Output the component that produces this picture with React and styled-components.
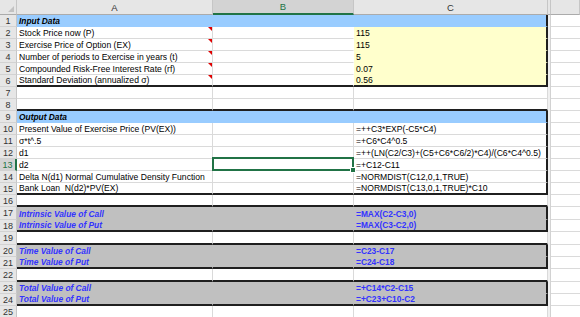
import React from "react";
import styled, { createGlobalStyle } from "styled-components";

const LINE = "#dadada";
const DARK = "#1f1f1f";
const GREEN = "#217346";
const BLUE_FILL = "#99ccff";
const YELLOW = "#ffffcc";
const GRAY = "#c0c0c0";

const rows = [
  { n: 1, a: "Input Data", title: true, fill: BLUE_FILL, box: true },
  { n: 2, a: "Stock Price now (P)", c: "115", note: true, cFill: YELLOW, box: true },
  { n: 3, a: "Exercise Price of Option (EX)", c: "115", note: true, cFill: YELLOW, box: true },
  { n: 4, a: "Number of periods to Exercise in years (t)", c: "5", note: true, cFill: YELLOW, box: true },
  { n: 5, a: "Compounded Risk-Free Interest Rate (rf)", c: "0.07", note: true, cFill: YELLOW, box: true },
  { n: 6, a: "Standard Deviation (annualized σ)", c: "0.56", note: true, cFill: YELLOW, box: true, edge: true },
  { n: 7 },
  { n: 8, edge: true },
  { n: 9, a: "Output Data", title: true, fill: BLUE_FILL, box: true },
  { n: 10, a: "Present Value of Exercise Price (PV(EX))", c: "=++C3*EXP(-C5*C4)", box: true },
  { n: 11, a: "σ*t^.5", c: "=+C6*C4^0.5", box: true },
  { n: 12, a: "d1", c: "=++(LN(C2/C3)+(C5+C6*C6/2)*C4)/(C6*C4^0.5)", box: true },
  { n: 13, a: "d2", c: "=+C12-C11", box: true, selected: true },
  { n: 14, a: "Delta N(d1) Normal Cumulative Density Function", c: "=NORMDIST(C12,0,1,TRUE)", box: true },
  { n: 15, a: "Bank Loan  N(d2)*PV(EX)", c: "=NORMDIST(C13,0,1,TRUE)*C10", box: true, edge: true },
  { n: 16, edge: true },
  { n: 17, h: 13, a: "Intrinsic Value of Call", c: "=MAX(C2-C3,0)", fill: GRAY, result: true, box: true },
  { n: 18, a: "Intrinsic Value of Put", c: "=MAX(C3-C2,0)", fill: GRAY, result: true, box: true, edge: true },
  { n: 19, h: 13, edge: true },
  { n: 20, a: "Time Value of Call", c: "=C23-C17", fill: GRAY, result: true, box: true },
  { n: 21, a: "Time Value of Put", c: "=C24-C18", fill: GRAY, result: true, box: true, edge: true },
  { n: 22, h: 13, edge: true },
  { n: 23, a: "Total Value of Call", c: "=+C14*C2-C15", fill: GRAY, result: true, box: true },
  { n: 24, a: "Total Value of Put", c: "=+C23+C10-C2", fill: GRAY, result: true, box: true, edge: true },
  { n: 25 },
];

const GlobalStyle = createGlobalStyle`
  html, body {
    margin: 0;
    padding: 0;
    background: #fff;
    overflow: hidden;
  }
  body {
    font-family: "Liberation Sans", Arial, sans-serif;
  }
`;

const Sheet = styled.div`
  width: 580px;
  height: 317px;
  overflow: hidden;
  background: #fff;
`;

const Row = styled.div`
  display: grid;
  grid-template-columns: 17px 196px 141px 194px 3px 1fr;
  height: ${(p) => p.$h}px;
`;

const Corner = styled.div`
  position: relative;
  box-sizing: border-box;
  background: #e6e6e6;
  border-right: 1px solid #c6c6c6;
  border-bottom: 1px solid #ababab;

  &::after {
    content: "";
    position: absolute;
    right: 2px;
    bottom: 2px;
    border-left: 6px solid transparent;
    border-bottom: 6px solid #c2c2c2;
  }
`;

const ColHead = styled.div`
  box-sizing: border-box;
  display: flex;
  align-items: center;
  justify-content: center;
  background: ${(p) => (p.$sel ? "#d3d3d3" : "#e6e6e6")};
  color: ${(p) => (p.$sel ? GREEN : "#333")};
  font-size: 9.5px;
  border-right: 1px solid #c6c6c6;
  border-bottom: ${(p) => (p.$sel ? `2px solid ${GREEN}` : "1px solid #ababab")};
`;

const RowHead = styled.div`
  box-sizing: border-box;
  display: flex;
  align-items: center;
  justify-content: center;
  background: ${(p) => (p.$sel ? "#d3d3d3" : "#e6e6e6")};
  color: ${(p) => (p.$sel ? GREEN : "#333")};
  font-size: 9px;
  border-right: ${(p) => (p.$sel ? `2px solid ${GREEN}` : "1px solid #c6c6c6")};
  border-bottom: 1px solid #d2d2d2;
`;

const Cell = styled.div`
  position: relative;
  box-sizing: border-box;
  display: flex;
  align-items: flex-end;
  padding: 0 2px;
  white-space: pre;
  font-size: ${(p) => (p.$bold ? 8.4 : 8.6)}px;
  line-height: 9px;
  color: ${(p) => (p.$result ? "#3333ff" : "#000")};
  font-weight: ${(p) => (p.$bold ? 700 : 400)};
  font-style: ${(p) => (p.$italic ? "italic" : "normal")};
  background: ${(p) => p.$fill || "transparent"};
  border-right: ${(p) =>
    p.$boxRight ? `2px solid ${DARK}` : `1px solid ${p.$rc || LINE}`};
  border-bottom: ${(p) =>
    p.$edge ? `2px solid ${DARK}` : `1px solid ${p.$fill || LINE}`};
  z-index: ${(p) => (p.$sel ? 1 : "auto")};

  &::after {
    content: "";
    display: ${(p) => (p.$note ? "block" : "none")};
    position: absolute;
    top: 0;
    right: 0;
    border-left: 4px solid transparent;
    border-top: 4px solid #e00000;
  }
`;

const Spacer = styled.div`
  box-sizing: border-box;
  background: #f0f0f0;
  border-right: 1px solid #d2d2d2;
`;

const Blank = styled.div`
  box-sizing: border-box;
  border-bottom: 1px solid ${LINE};
`;

const Selection = styled.span`
  position: absolute;
  left: -1px;
  top: -2px;
  right: -1px;
  bottom: -1px;
  border: 2px solid ${GREEN};
  pointer-events: none;

  &::after {
    content: "";
    position: absolute;
    right: -4px;
    bottom: -4px;
    width: 4px;
    height: 4px;
    background: ${GREEN};
    border: 1px solid #fff;
  }
`;

const SheetRow = ({ r }) => {
  const fillA = r.fill;
  const fillC = r.cFill || r.fill;
  const label = r.title || r.result;
  return (
    <Row $h={r.h || 12}>
      <RowHead $sel={r.selected}>{r.n}</RowHead>
      <Cell
        $fill={fillA}
        $edge={r.edge}
        $rc={fillA}
        $bold={label}
        $italic={label}
        $result={r.result}
        $note={r.note}
      >
        {r.a}
      </Cell>
      <Cell $fill={r.fill} $edge={r.edge} $rc={r.fill || (r.cFill ? "#fff" : undefined)} $sel={r.selected}>
        {r.selected && <Selection />}
      </Cell>
      <Cell $fill={fillC} $edge={r.edge} $boxRight={r.box} $bold={r.result} $result={r.result}>
        {r.c}
      </Cell>
      <Spacer />
      <Blank />
    </Row>
  );
};

const App = () => {
  return (
    <Sheet>
      <GlobalStyle />
      <Row $h={15}>
        <Corner />
        <ColHead>A</ColHead>
        <ColHead $sel>B</ColHead>
        <ColHead>C</ColHead>
        <ColHead />
        <ColHead />
      </Row>
      {rows.map((r) => (
        <SheetRow key={r.n} r={r} />
      ))}
    </Sheet>
  );
};

export default App;
